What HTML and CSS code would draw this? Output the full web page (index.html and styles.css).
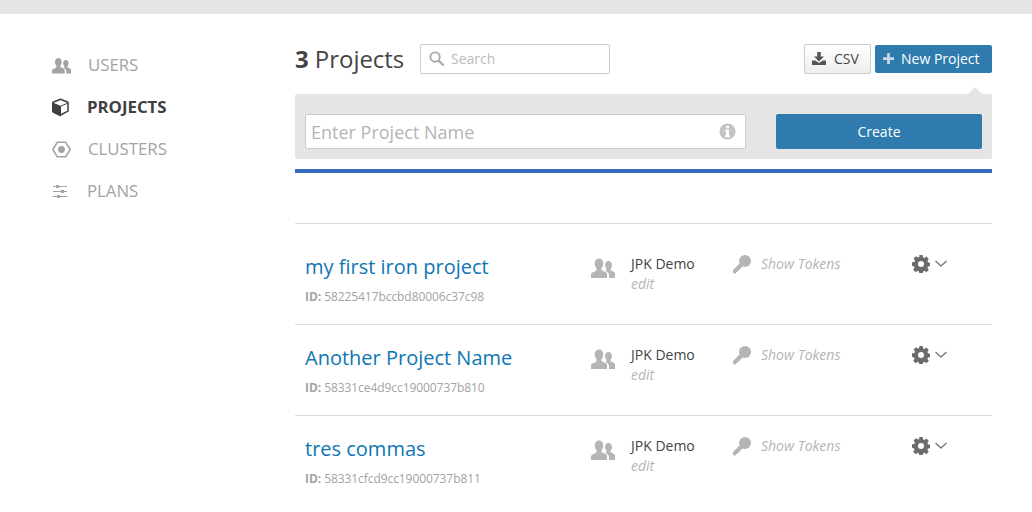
FILE: index.html
```html
<!DOCTYPE html>
<html lang="en">
<head>
<meta charset="utf-8">
<title>Projects</title>
<link rel="stylesheet" href="styles.css">
</head>
<body>
<svg class="defs" width="0" height="0" aria-hidden="true">
  <symbol id="users" viewBox="0 0 24 20">
    <path d="M8 .5c2.600 0 4.300 2.200 4.300 5 0 2-.8 3.700-1.800 4.700v1.800c1.500.8 4.500 1.800 5.500 3.500V20H0v-4c1-1.700 4-2.700 5.500-3.500v-2.300C4.500 9.200 3.700 7.500 3.700 5.500c0-2.800 1.700-5 4.300-5z"/>
    <path d="M17.500 3c2.100 0 3.500 1.800 3.500 4 0 1.600-.6 3-1.500 3.800v1.500c1.200.6 3.300 1.300 4.500 2.700V20h-6v-4c-.8-1.300-2.500-2.500-3.800-3.200l1.300-.7v-1.300C15 10 14 8.600 14 7c0-2.200 1.400-4 3.500-4z"/>
  </symbol>
  <symbol id="key" viewBox="0 0 18 19">
    <circle cx="12" cy="6" r="6"/>
    <path d="M8.500 6.500l3 3L4 17H3v1.500H1L0 17.500V15z"/>
  </symbol>
  <symbol id="gear" viewBox="0 0 18 18">
    <path fill-rule="evenodd" d="M7.300 0h3.400l.4 2.400 1.300.6 2-1.400 2.400 2.400-1.400 2 .6 1.300 2.400.4v3.400l-2.400.4-.6 1.300 1.400 2-2.400 2.400-2-1.400-1.300.6-.4 2.400H7.300l-.4-2.400-1.300-.6-2 1.400-2.400-2.400 1.400-2-.6-1.300L0 10.700V7.300l2.400-.4.600-1.300-1.400-2L4 1.200l2 1.400 1.300-.6zM9 6a3 3 0 1 0 0 6 3 3 0 0 0 0-6z"/>
  </symbol>
</svg>

<div class="topbar"></div>

<div class="page">
  <nav class="sidebar">
    <a class="nav-item">
      <svg class="nav-icon"><use href="#users"/></svg>
      <span class="nav-label">USERS</span>
    </a>
    <a class="nav-item active tight">
      <svg class="nav-icon" viewBox="0 0 19 19"><path d="M8.500 1.200L16 4.200v9L8.500 17 1 13.200v-9z" fill="none" stroke="currentColor" stroke-width="1.500" stroke-linejoin="round"/><path d="M.5 5l8 3.300V18L.5 14zM8.500 8.300L16 5" fill="currentColor" stroke="currentColor" stroke-width="1"/></svg>
      <span class="nav-label">PROJECTS</span>
    </a>
    <a class="nav-item">
      <svg class="nav-icon" viewBox="0 0 18 18"><path d="M5 2.200h8l4.200 6.800-4.200 6.800H5L.8 9z" fill="none" stroke="currentColor" stroke-width="1.500"/><circle cx="9" cy="9" r="3.200"/></svg>
      <span class="nav-label">CLUSTERS</span>
    </a>
    <a class="nav-item tight">
      <svg class="nav-icon" viewBox="0 0 19 19"><path d="M1 4.500h14M1 9.500h14M1 14.500h14" stroke="currentColor" stroke-width="1" fill="none"/><rect x="4" y="3" width="3" height="3"/><rect x="9" y="8" width="3" height="3"/><rect x="5" y="13" width="3" height="3"/></svg>
      <span class="nav-label">PLANS</span>
    </a>
  </nav>

  <main class="main">
    <header class="header">
      <h1 class="title"><b>3</b> Projects</h1>
      <div class="search">
        <svg class="search-icon" viewBox="0 0 16 16"><circle cx="6.500" cy="6.500" r="5" fill="none" stroke="currentColor" stroke-width="2"/><path d="M10.500 10.500l4.500 4.500" stroke="currentColor" stroke-width="2.400" stroke-linecap="round"/></svg>
        <span>Search</span>
      </div>
      <div class="actions">
        <button class="btn btn-csv">
          <svg class="btn-icon" viewBox="0 0 14 13"><path d="M5.200 0h3.600v4.500H12L7 9.500 2 4.500h3.200zM0 8.500h3.200L7 11l3.800-2.500H14V13H0z"/></svg>
          CSV
        </button>
        <button class="btn btn-new">
          <svg class="btn-icon" viewBox="0 0 12 12"><path d="M4.500 0h3v4.500H12v3H7.500V12h-3V7.500H0v-3h4.500z"/></svg>
          New Project
        </button>
      </div>
    </header>

    <section class="create">
      <div class="name-input">
        <span>Enter Project Name</span>
        <svg class="info" viewBox="0 0 18 18"><path fill-rule="evenodd" d="M9 .5a8.500 8.500 0 1 0 0 17 8.500 8.500 0 0 0 0-17zM7.500 2.800h3v2.700h-3zM6.500 7h4v6h1.200v2H6.300v-2h1.300V9H6.500z"/></svg>
      </div>
      <button class="create-btn">Create</button>
    </section>
    <div class="rule"></div>

    <ul class="list">
      <li class="row">
        <div class="col-name">
          <a class="name">my first iron project</a>
          <div class="id"><b>ID:</b> 58225417bccbd80006c37c98</div>
        </div>
        <svg class="users-icon"><use href="#users"/></svg>
        <div class="col-org"><div>JPK Demo</div><em>edit</em></div>
        <svg class="key-icon"><use href="#key"/></svg>
        <em class="tokens">Show Tokens</em>
        <svg class="gear-icon"><use href="#gear"/></svg>
        <svg class="chevron" viewBox="0 0 12 7"><path d="M.5 1l5.500 5 5.500-5" fill="none" stroke="currentColor" stroke-width="1.300"/></svg>
      </li>
      <li class="row">
        <div class="col-name">
          <a class="name">Another Project Name</a>
          <div class="id"><b>ID:</b> 58331ce4d9cc19000737b810</div>
        </div>
        <svg class="users-icon"><use href="#users"/></svg>
        <div class="col-org"><div>JPK Demo</div><em>edit</em></div>
        <svg class="key-icon"><use href="#key"/></svg>
        <em class="tokens">Show Tokens</em>
        <svg class="gear-icon"><use href="#gear"/></svg>
        <svg class="chevron" viewBox="0 0 12 7"><path d="M.5 1l5.500 5 5.500-5" fill="none" stroke="currentColor" stroke-width="1.300"/></svg>
      </li>
      <li class="row">
        <div class="col-name">
          <a class="name">tres commas</a>
          <div class="id"><b>ID:</b> 58331cfcd9cc19000737b811</div>
        </div>
        <svg class="users-icon"><use href="#users"/></svg>
        <div class="col-org"><div>JPK Demo</div><em>edit</em></div>
        <svg class="key-icon"><use href="#key"/></svg>
        <em class="tokens">Show Tokens</em>
        <svg class="gear-icon"><use href="#gear"/></svg>
        <svg class="chevron" viewBox="0 0 12 7"><path d="M.5 1l5.500 5 5.500-5" fill="none" stroke="currentColor" stroke-width="1.300"/></svg>
      </li>
    </ul>
  </main>
</div>
</body>
</html>
```

FILE: styles.css
```css
* { box-sizing: border-box; }
html, body { margin: 0; height: 512px; overflow: hidden; background: #fff; }
body { font-family: "Open Sans", sans-serif; color: #444; }
.defs { position: absolute; }
svg { fill: currentColor; display: block; flex: none; }

.topbar { height: 14px; background: #e5e5e5; }
.page { display: flex; padding-right: 40px; }

.sidebar { width: 295px; padding: 30px 0 0 52px; flex: none; }
.nav-item { display: flex; align-items: center; height: 42px; color: #a3a3a3; font-size: 16.800px; }
.nav-label { margin-top: -2px; }
.nav-icon { width: 19px; height: 19px; margin-right: 17px; }
.nav-item.tight .nav-icon { margin-right: 16px; }
.nav-item.active { color: #404040; font-weight: 700; }

.main { flex: 1; min-width: 0; }
.header { display: flex; align-items: center; height: 80px; padding-top: 10px; }
.title { margin: -2px 0 0; font-size: 24px; font-weight: 400; color: #444; width: 125px; letter-spacing: -.05px; }
.title b { font-weight: 700; }
.search { display: flex; align-items: center; width: 190px; height: 30px; border: 1px solid #ccc; border-radius: 2px; padding: 0 0 2px 8px; color: #bbb; font-size: 14px; gap: 7px; }
.search-icon { width: 15px; height: 15px; color: #aaa; }
.actions { margin-left: auto; display: flex; gap: 4px; align-items: center; }
.btn { display: flex; align-items: center; height: 30px; border-radius: 2px; font: 14px "Open Sans", sans-serif; padding: 0 0 2px; }
.btn-csv { width: 67px; border: 1px solid #ccc; background: linear-gradient(#fff, #eee); color: #444; gap: 8px; padding-left: 7px; }
.btn-new { width: 117px; height: 28px; border: 0; background: #2f7bae; color: #fff; gap: 7px; padding-left: 8px; }
.btn-icon { width: 14px; height: 13px; }
.btn-csv .btn-icon { color: #555; }
.btn-new .btn-icon { width: 11px; height: 11px; color: #c5d9e8; }

.create { position: relative; display: flex; justify-content: space-between; height: 65px; background: #e5e5e5; border-radius: 2px; padding: 20px 10px 10px; }
.create::before { content: ""; position: absolute; right: 10px; top: -7px; width: 0; height: 0; border: 7px solid transparent; border-top: 0; border-bottom-color: #e5e5e5; }
.name-input { display: flex; align-items: center; justify-content: space-between; width: 441px; height: 35px; background: #fff; border: 1px solid #ccc; border-radius: 2px; padding: 0 9px 0 5px; color: #b5b5b5; font-size: 18px; }
.info { width: 17px; height: 17px; color: #c3c3c3; }
.create-btn { width: 206px; height: 35px; border: 0; border-radius: 2px; background: #2f7bae; color: #fff; font: 14px "Open Sans", sans-serif; padding: 0; }
.rule { height: 4px; margin-top: 10px; background: #3a6bb8; }

.list { list-style: none; margin: 50px 0 0; padding: 0; border-top: 1px solid #ddd; }
.row { display: flex; align-items: flex-start; height: 91px; padding: 20px 0 0 9px; border-bottom: 1px solid #ddd; }
.row:first-child { height: 101px; padding-top: 30px; }
.row:last-child { border-bottom: 0; }
.col-name { width: 287px; flex: none; margin-top: -1px; padding-left: 1px; }
.name { display: block; font-size: 20px; line-height: 27px; color: #0e76b4; }
.id { margin-top: 9px; font-size: 12px; line-height: 16px; color: #a3a3a3; letter-spacing: -.07px; }
.users-icon { width: 24px; height: 20px; margin-top: 4px; color: #b5b5b5; }
.col-org { margin-left: 16px; width: 102px; flex: none; font-size: 14px; line-height: 20px; color: #444; }
.col-org em { display: block; color: #b5b5b5; }
.key-icon { width: 18px; height: 19px; margin-top: 1px; color: #b5b5b5; }
.tokens { margin-left: 10px; width: 151px; flex: none; font-size: 14px; line-height: 20px; color: #b5b5b5; }
.gear-icon { width: 18px; height: 18px; margin-top: 1px; color: #6b6b6b; }
.chevron { width: 12px; height: 7px; margin: 6px 0 0 5px; color: #777; }
```
